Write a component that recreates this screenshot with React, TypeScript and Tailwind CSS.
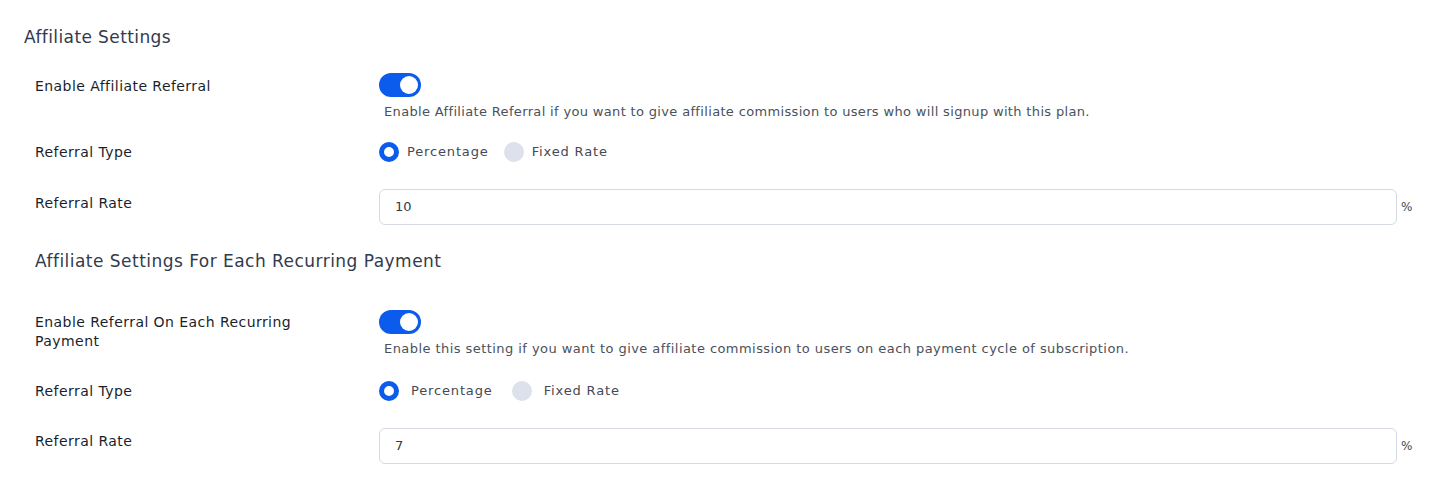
import React from "react";

const font = { fontFamily: '"DejaVu Sans", "Noto Sans", sans-serif' };

function Toggle() {
  return (
    <div className="relative h-[24px] w-[42px] rounded-full bg-[#0b5ced]">
      <div className="absolute right-[3px] top-[3px] h-[18px] w-[18px] rounded-full bg-white" />
    </div>
  );
}

function Radio({ checked, label, gap }: { checked: boolean; label: string; gap: string }) {
  return (
    <div className={`flex items-center ${gap}`}>
      {checked ? (
        <div className="h-[20px] w-[20px] rounded-full border-[5px] border-[#0b5ced] bg-white" />
      ) : (
        <div className="h-[20px] w-[20px] rounded-full bg-[#dde1ec]" />
      )}
      <span className="text-[13px] leading-[20px] tracking-[0.85px] text-[#444a55]">{label}</span>
    </div>
  );
}

function RateInput({ value }: { value: string }) {
  return (
    <div className="flex items-center">
      <div className="flex h-[36px] flex-1 items-center rounded-[6px] border border-[#d5d9e3] px-[15px] text-[13px] text-[#333a48]">
        {value}
      </div>
      <span className="ml-[4px] w-[38px] text-[12px] text-[#444a55]">%</span>
    </div>
  );
}

const labelCls = "w-[344px] shrink-0 text-[14px] leading-[20px] tracking-[0.44px] text-[#1a1f2c]";
const descCls = "ml-[5px] mt-[5px] text-[13px] leading-[20px] text-[#4b515c]";

export default function App() {
  return (
    <div className="min-h-[503px] bg-white pl-[24px]" style={font}>
      <h2 className="pt-[25px] text-[17px] leading-[24px] tracking-[0.4px] text-[#323a4d]">Affiliate Settings</h2>
      <div className="pl-[11px]">
        {/* Row 1 */}
        <div className="mt-[24px] flex items-start">
          <div className={`mt-[3px] ${labelCls}`}>Enable Affiliate Referral</div>
          <div className="flex-1">
            <Toggle />
            <p className={`${descCls} tracking-[0.34px]`}>
              Enable Affiliate Referral if you want to give affiliate commission to users who will signup with this plan.
            </p>
          </div>
        </div>
        {/* Row 2 */}
        <div className="mt-[20px] flex items-center">
          <div className={labelCls}>Referral Type</div>
          <div className="flex items-center gap-[15px]">
            <Radio checked label="Percentage" gap="gap-[8px]" />
            <Radio checked={false} label="Fixed Rate" gap="gap-[8px]" />
          </div>
        </div>
        {/* Row 3 */}
        <div className="mt-[27px] flex items-start">
          <div className={`mt-[4px] ${labelCls}`}>Referral Rate</div>
          <div className="flex-1">
            <RateInput value="10" />
          </div>
        </div>

        <h3 className="mt-[24px] text-[17px] leading-[24px] tracking-[0.47px] text-[#323a4d]">
          Affiliate Settings For Each Recurring Payment
        </h3>

        {/* Row 4 */}
        <div className="mt-[37px] flex items-start">
          <div className={`mt-[3px] pr-[50px] !leading-[19px] ${labelCls}`}>
            Enable Referral On Each Recurring Payment
          </div>
          <div className="flex-1">
            <Toggle />
            <p className={`${descCls} tracking-[0.44px]`}>
              Enable this setting if you want to give affiliate commission to users on each payment cycle of subscription.
            </p>
          </div>
        </div>
        {/* Row 5 */}
        <div className="mt-[22px] flex items-center">
          <div className={labelCls}>Referral Type</div>
          <div className="flex items-center gap-[19px]">
            <Radio checked label="Percentage" gap="gap-[12px]" />
            <Radio checked={false} label="Fixed Rate" gap="gap-[12px]" />
          </div>
        </div>
        {/* Row 6 */}
        <div className="mt-[27px] flex items-start">
          <div className={`mt-[3px] ${labelCls}`}>Referral Rate</div>
          <div className="flex-1">
            <RateInput value="7" />
          </div>
        </div>
      </div>
    </div>
  );
}
